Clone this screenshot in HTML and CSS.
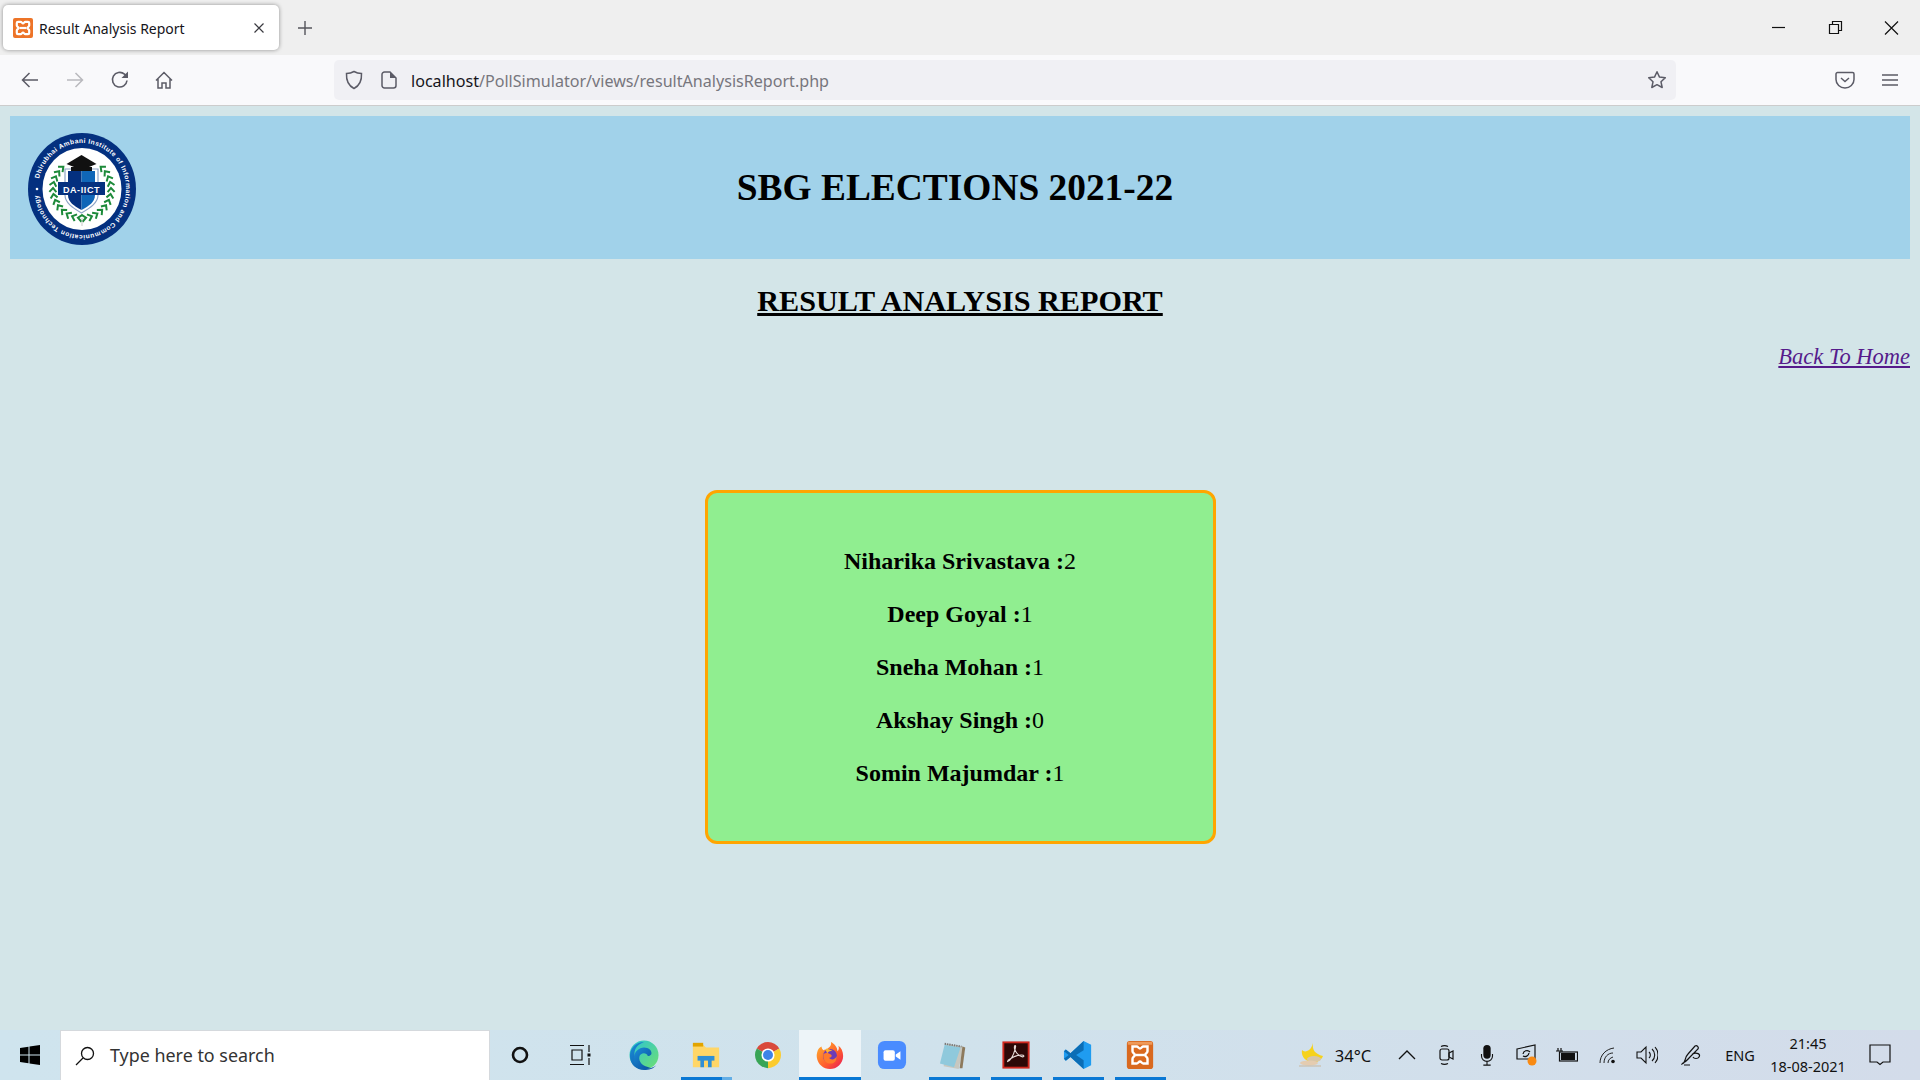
FILE: index.html
```html
<!DOCTYPE html>
<html lang="en">
<head>
<meta charset="utf-8">
<title>Result Analysis Report</title>
<link rel="stylesheet" href="styles.css">
</head>
<body>
<div class="screen">
  <div class="tabstrip">
    <div class="tab">
      <svg class="favicon" viewBox="0 0 20 20"><rect width="20" height="20" rx="2" fill="#ed7428"/><path d="M5 3.800h2.700c1 0 1.400 1.700 2.300 1.700s1.300-1.700 2.300-1.700H15a1.200 1.200 0 0 1 1.200 1.200v2.500c0 1-1.700 1.600-1.700 2.500s1.700 1.500 1.700 2.500V15a1.200 1.200 0 0 1-1.200 1.200h-2.700c-1 0-1.400-1.700-2.300-1.700s-1.300 1.700-2.300 1.700H5A1.200 1.200 0 0 1 3.800 15v-2.500c0-1 1.700-1.600 1.700-2.500S3.800 8.500 3.800 7.500V5A1.200 1.200 0 0 1 5 3.800z" fill="none" stroke="#fff" stroke-width="2.200"/><path d="M6.500 10h7" stroke="#fff" stroke-width="2.200"/></svg>
      <span class="tab-title">Result Analysis Report</span>
      <svg class="tab-close" viewBox="0 0 12 12"><path d="M1.500 1.500l9 9M10.500 1.500l-9 9" stroke="#3a3a40" stroke-width="1.200"/></svg>
    </div>
    <svg class="newtab" viewBox="0 0 16 16"><path d="M8 1v14M1 8h14" stroke="#55555c" stroke-width="1.400"/></svg>
    <div class="winctl">
      <svg class="winbtn" viewBox="0 0 56 20"><path d="M21 9.500h13" stroke="#111" stroke-width="1.200"/></svg>
      <svg class="winbtn" viewBox="0 0 56 20"><path d="M23.500 6.500h9v9h-9zM26.500 6.500v-3h9v9h-3" fill="none" stroke="#111" stroke-width="1.200" transform="translate(-1 0)"/></svg>
      <svg class="winbtn" viewBox="0 0 56 20"><path d="M22 3.500l13 13M35 3.500l-13 13" stroke="#111" stroke-width="1.200"/></svg>
    </div>
  </div>
  <div class="toolbar">
    <svg class="tool" viewBox="0 0 20 20"><path d="M18 10H2.500M9.500 3l-7 7 7 7" fill="none" stroke="#5b5b66" stroke-width="1.500"/></svg>
    <svg class="tool" viewBox="0 0 20 20"><path d="M2 10h15.500M10.500 3l7 7-7 7" fill="none" stroke="#b9b9be" stroke-width="1.500"/></svg>
    <svg class="tool" viewBox="0 0 20 20"><path d="M18 10.500a7.300 7.300 0 1 1-2.500-6.300L18 6.500" fill="none" stroke="#5b5b66" stroke-width="1.600"/><path d="M19 1.500V8h-6.500z" fill="#5b5b66"/></svg>
    <svg class="tool" viewBox="0 0 20 20"><path d="M2 10.500L10 2.500l8 8M4 8.500V18h4v-5h4v5h4V8.500" fill="none" stroke="#5b5b66" stroke-width="1.500"/></svg>
    <div class="urlbar">
      <svg class="url-shield" viewBox="0 0 20 20"><path d="M10 1.500c2.500 1.500 5 2 7.500 2 .4 7-1.700 12-7.500 15C4.200 15.500 2.100 10.500 2.500 3.500c2.500 0 5-.5 7.500-2z" fill="none" stroke="#5b5b66" stroke-width="1.500"/></svg>
      <svg class="url-page" viewBox="0 0 16 18"><path d="M4 1h5l6 6v7.500A2.500 2.500 0 0 1 12.500 17h-9A2.500 2.500 0 0 1 1 14.500v-11A2.500 2.500 0 0 1 3.500 1z" fill="none" stroke="#5b5b66" stroke-width="1.500"/><path d="M9 1v6h6" fill="#5b5b66"/></svg>
      <span class="url-text"><span class="url-host">localhost</span>/PollSimulator/views/resultAnalysisReport.php</span>
      <svg class="url-star" viewBox="0 0 20 20"><path d="M10 1.800l2.500 5.300 5.800.7-4.300 4 1.200 5.700L10 14.700l-5.200 2.800L6 11.800l-4.300-4 5.800-.7z" fill="none" stroke="#5b5b66" stroke-width="1.500" stroke-linejoin="round"/></svg>
    </div>
    <svg class="pocket" viewBox="0 0 20 18"><path d="M2.500 1.500h15A1.500 1.500 0 0 1 19 3v5.500a9 8.500 0 0 1-18 0V3a1.500 1.500 0 0 1 1.500-1.500z" fill="none" stroke="#5b5b66" stroke-width="1.500"/><path d="M6 7l4 3.500L14 7" fill="none" stroke="#5b5b66" stroke-width="1.500"/></svg>
    <svg class="burger" viewBox="0 0 16 14"><path d="M0 2h16M0 7h16M0 12h16" stroke="#5b5b66" stroke-width="1.500"/></svg>
  </div>

  <main class="page">
    <header class="banner">
      <svg class="logo" viewBox="0 0 108 112">
        <defs>
          <path id="ring" d="M11.100 45.700A44 46 0 1 1 96.900 66.300A44 46 0 1 1 11.100 45.700"/>
          <path id="lf" d="M4-3.500L0 0L4 3.500" fill="none" stroke="#1d8a3a" stroke-width="2"/>
          <path id="rf" d="M-4-3.500L0 0L-4 3.500" fill="none" stroke="#1d8a3a" stroke-width="2"/>
        </defs>
        <ellipse cx="54" cy="56" rx="54" ry="56" fill="#04307f"/>
        <ellipse cx="54" cy="56" rx="39.500" ry="41" fill="#fff"/>
        <text class="logo-ring"><textPath href="#ring" textLength="266">Dhirubhai Ambani Institute of Information and Communication Technology</textPath></text>
        <circle cx="9" cy="56" r="1.300" fill="#fff"/>
        <use href="#lf" transform="rotate(8 54 56) translate(54 85)"/>
        <use href="#lf" transform="rotate(20 54 56) translate(54 85)"/>
        <use href="#lf" transform="rotate(32 54 56) translate(54 85)"/>
        <use href="#lf" transform="rotate(44 54 56) translate(54 85)"/>
        <use href="#lf" transform="rotate(56 54 56) translate(54 85)"/>
        <use href="#lf" transform="rotate(68 54 56) translate(54 85)"/>
        <use href="#lf" transform="rotate(80 54 56) translate(54 85)"/>
        <use href="#lf" transform="rotate(92 54 56) translate(54 85)"/>
        <use href="#lf" transform="rotate(104 54 56) translate(54 85)"/>
        <use href="#lf" transform="rotate(116 54 56) translate(54 85)"/>
        <use href="#lf" transform="rotate(128 54 56) translate(54 85)"/>
        <use href="#lf" transform="rotate(140 54 56) translate(54 85)"/>
        <use href="#rf" transform="rotate(-8 54 56) translate(54 85)"/>
        <use href="#rf" transform="rotate(-20 54 56) translate(54 85)"/>
        <use href="#rf" transform="rotate(-32 54 56) translate(54 85)"/>
        <use href="#rf" transform="rotate(-44 54 56) translate(54 85)"/>
        <use href="#rf" transform="rotate(-56 54 56) translate(54 85)"/>
        <use href="#rf" transform="rotate(-68 54 56) translate(54 85)"/>
        <use href="#rf" transform="rotate(-80 54 56) translate(54 85)"/>
        <use href="#rf" transform="rotate(-92 54 56) translate(54 85)"/>
        <use href="#rf" transform="rotate(-104 54 56) translate(54 85)"/>
        <use href="#rf" transform="rotate(-116 54 56) translate(54 85)"/>
        <use href="#rf" transform="rotate(-128 54 56) translate(54 85)"/>
        <use href="#rf" transform="rotate(-140 54 56) translate(54 85)"/>
        <path d="M37 36h33v26c0 8-8 13-16.500 18C45 75 37 70 37 62z" fill="#fff" stroke="#8ea4c6" stroke-width="1.200"/>
        <path d="M40 38h13.500v39C46 73 40 69 40 62z" fill="#04307f"/>
        <path d="M53.500 38H67v24c0 7-6 11-13.500 15z" fill="#0f66b8"/>
        <path d="M53.500 22l15 9-15 6-15-6z" fill="#111"/>
        <path d="M43 34h21v4H43z" fill="#111"/>
        <rect x="30" y="49" width="47" height="13" fill="#04307f"/>
        <text class="logo-name" x="53.500" y="59.500" text-anchor="middle">DA-IICT</text>
        <path d="M54 85v8" stroke="#bbb" stroke-width=".8"/>
      </svg>
      <h1 class="banner-title">SBG ELECTIONS 2021-22</h1>
    </header>
    <h2 class="report-title">RESULT ANALYSIS REPORT</h2>
    <div class="back-row"><a class="back-link" href="#">Back To Home</a></div>
    <section class="result-box">
      <p class="result"><b>Niharika Srivastava :</b>2</p>
      <p class="result"><b>Deep Goyal :</b>1</p>
      <p class="result"><b>Sneha Mohan :</b>1</p>
      <p class="result"><b>Akshay Singh :</b>0</p>
      <p class="result"><b>Somin Majumdar :</b>1</p>
    </section>
  </main>

  <footer class="taskbar">
    <div class="start"><svg class="win" viewBox="0 0 20 20"><path d="M0 3l8.500-1.300V9.500H0zM9.500 1.500L20 0v9.500H9.500zM0 10.500h8.500v7.800L0 17zM9.500 10.500H20V20L9.500 18.500z" fill="#000"/></svg></div>
    <div class="search">
      <svg class="search-ico" viewBox="0 0 20 20"><circle cx="12.500" cy="7.500" r="6" fill="none" stroke="#111" stroke-width="1.300"/><path d="M8 12L1 19" stroke="#111" stroke-width="1.300"/></svg>
      <span class="search-text">Type here to search</span>
    </div>
    <div class="slot"><svg class="i18" viewBox="0 0 18 18"><circle cx="9" cy="9" r="7" fill="none" stroke="#111" stroke-width="2.600"/></svg></div>
    <div class="slot"><svg class="i22 taskview" viewBox="0 0 22 22"><path d="M1 1.500h14M1 20.500h14M3 6h10v10H3zM20 1v7M20 14v7" fill="none" stroke="#111" stroke-width="1.200"/><rect x="18.500" y="9.500" width="3" height="3" fill="#111"/></svg></div>
    <div class="slot"><svg class="app" viewBox="0 0 32 32"><defs><linearGradient id="edge1" x1="0" y1="0" x2="1" y2="1"><stop offset="0" stop-color="#2bc3d6"/><stop offset="1" stop-color="#6fe070"/></linearGradient><linearGradient id="edge2" x1="0" y1="0" x2="1" y2="1"><stop offset="0" stop-color="#1a8ed8"/><stop offset="1" stop-color="#0b4f9e"/></linearGradient></defs><circle cx="16" cy="16" r="15.500" fill="url(#edge1)"/><path d="M1 17C1 8 8 2 16 2 8 5 5 10 6 17c1 8 8 13 16 13 2 0 5-1 7-3-3 4-8 5-13 5C8 32 1 26 1 17z" fill="url(#edge2)"/><path d="M5 21C5 12 11 8 16 8c5 0 8 3 8 6 0 2-2 3-4 3-1-4-8-4-9 1s4 11 12 11c-9 3-18-1-18-8z" fill="url(#edge2)"/></svg></div>
    <div class="slot has-line has-stack"><svg class="app" viewBox="0 0 32 32"><path d="M2 5h11l3 3h14v21H2z" fill="#ffd667"/><path d="M2 3h11v4H2z" fill="#e2a400"/><path d="M10 29V17h12v12h-4v-7h-4v7z" fill="#2f8fd6"/><path d="M7 17h18v5H7z" fill="#2f8fd6"/><path d="M14 22h4v7h-4z" fill="#ffd667"/></svg></div>
    <div class="slot"><svg class="app" viewBox="0 0 32 32"><path d="M16 16L4 9a14 14 0 0 1 24 0z" fill="#d9493b"/><path d="M16 16l12-7a14 14 0 0 1-12 21z" fill="#fbcb2e"/><path d="M16 16v14A14 14 0 0 1 4 9z" fill="#39a556"/><circle cx="16" cy="16" r="7" fill="#fff"/><circle cx="16" cy="16" r="5.300" fill="#3f83e8"/></svg></div>
    <div class="slot has-line active"><svg class="app" viewBox="0 0 32 32"><defs><linearGradient id="fx" x1="0" y1="0" x2="1" y2="1"><stop offset="0" stop-color="#ffb52c"/><stop offset=".6" stop-color="#ff5b2e"/><stop offset="1" stop-color="#e6175c"/></linearGradient></defs><path d="M3 11c-1 3-1.500 5-1 8 1 7 7 12 14 12s14-6 14-14c0-5-2-9-5-11 1 3 0 5-1 6 0-4-3-8-7-10 1 4-2 6-5 8-1 0-2 0-3 1-1-1-2-2-2-4-2 1-3 2-4 4z" fill="url(#fx)"/><circle cx="16" cy="17" r="7.500" fill="#6d3bb8"/><path d="M9 15c3-2 5-1 7 0 3 1 2 4-1 4 2 3 7 2 8-2 1 6-4 9-8 8-4 0-7-5-6-10z" fill="#ff7a2c"/><path d="M12 9c2 1 5 1 7 3-3-1-4 0-6 2-1-2-2-3-1-5z" fill="#ffb52c"/></svg></div>
    <div class="slot"><svg class="app" viewBox="0 0 32 32"><rect width="30" height="30" x="1" y="1" rx="7" fill="#4a8cff"/><rect x="7" y="11" width="12" height="11" rx="2" fill="#fff"/><path d="M20 15.500l5-3.500v9l-5-3.500z" fill="#fff"/></svg></div>
    <div class="slot has-line"><svg class="app" viewBox="0 0 32 32"><path d="M7 4l19 3-5 24-16-3z" fill="#c7c7bf"/><path d="M6 5l17 3-7 21-15-4z" fill="#8fc9dc"/><path d="M25 7l3 1-3 22-3 0z" fill="#8d7a5d"/><path d="M6 4l18 3" stroke="#777" stroke-width="2" stroke-dasharray="1.500 1"/></svg></div>
    <div class="slot has-line"><svg class="app" viewBox="0 0 32 32"><rect x="2.500" y="2.500" width="27" height="27" fill="#2d0807" stroke="#d0281f" stroke-width="2"/><path d="M7 23c3-1 6-6 8-13 .5-3 1-4 0-4s-1 3 0 5c2 4 4 6 8 7 2 0 2-2-1-2-4 0-9 2-12 4-2 1-3 2-3 3z" fill="none" stroke="#e8dcd9" stroke-width="1.200"/></svg></div>
    <div class="slot has-line"><svg class="app" viewBox="0 0 32 32"><path d="M22 1l8 4v22l-8 4-14-13-5 4-2-2v-8l2-2 5 4z" fill="#1f9cf0"/><path d="M22 1v10l-8 5 8 5.500V31L8 18l-5 4-2-2 5-4-5-4 2-2 5 4z" fill="#0b6db5"/></svg></div>
    <div class="slot has-line"><svg class="app" viewBox="0 0 32 32"><rect x="2" y="1" width="28" height="30" rx="3" fill="#d9691f"/><rect x="3" y="2" width="26" height="3" fill="#ee9a5a"/><path d="M8 7h4.500c1.500 0 2 2 3.500 2s2-2 3.500-2H24v5c0 2-2.500 2.500-2.500 4s2.500 2 2.500 4v5h-4.500c-1.500 0-2-2-3.500-2s-2 2-3.500 2H8v-5c0-2 2.500-2.500 2.500-4S8 14 8 12z" fill="none" stroke="#fff" stroke-width="2.600"/><path d="M11 16h10" stroke="#fff" stroke-width="2.600"/></svg></div>
    <div class="tray">
      <div class="tray-weather"><svg class="weather" viewBox="0 0 28 26"><path d="M16 1c-1 7 2 11 10 13-2 5-8 8-13 6-6-2-9-7-8-12 1 1 3 2 5 1 3-1 5-4 6-8z" fill="#f6d21c"/><ellipse cx="17" cy="17" rx="7" ry="3" fill="#d7c6a8"/><ellipse cx="12" cy="21" rx="9" ry="2.500" fill="#e4ccb0"/><path d="M2 24h22" stroke="#c9b79d" stroke-width="1"/></svg></div>
      <div class="tray-temp">34°C</div>
      <div class="tslot"><svg class="i18" viewBox="0 0 18 18"><path d="M1 13l8-8 8 8" fill="none" stroke="#111" stroke-width="1.300"/></svg></div>
      <div class="tslot"><svg class="i22" viewBox="0 0 16 22"><rect x="1" y="5" width="9" height="11" rx="2" fill="none" stroke="#111" stroke-width="1.200"/><path d="M10 9l4-2v8l-4-2z" fill="none" stroke="#111" stroke-width="1.200"/><path d="M2 2.500c2-1 5-1 7 0M2 19.500c2 1 5 1 7 0" fill="none" stroke="#111" stroke-width="1.200"/></svg></div>
      <div class="tslot"><svg class="i22" viewBox="0 0 16 24"><rect x="4" y="1" width="8" height="15" rx="4" fill="#111"/><path d="M2 11v2a6 6 0 0 0 12 0v-2M8 19v4M4 23h8" fill="none" stroke="#111" stroke-width="1.200"/></svg></div>
      <div class="tslot"><svg class="i22" viewBox="0 0 22 22"><path d="M1 5L19 1v14H1z" fill="none" stroke="#111" stroke-width="1.200"/><path d="M7 10a4 4 0 0 1 7-2M13 9a4 4 0 0 1-6 3" fill="none" stroke="#111" stroke-width="1.200"/><circle cx="16" cy="17" r="4.500" fill="#f98a12"/></svg></div>
      <div class="tslot"><svg class="i22" viewBox="0 0 22 14"><rect x="3.500" y="4" width="18" height="9" fill="none" stroke="#111" stroke-width="1.200"/><rect x="5" y="5" width="14" height="7" fill="#111"/><path d="M0 3h7M2 0v3M5 0v3" stroke="#111" stroke-width="1.200"/></svg></div>
      <div class="tslot"><svg class="i18" viewBox="0 0 18 18"><path d="M2 17C2 9 8 3 16 2M6 17c0-6 4-10 9-10M10 17c0-3 2-5 5-6" fill="none" stroke="#222" stroke-width="1"/><circle cx="15" cy="15.500" r="1.800" fill="#111"/></svg></div>
      <div class="tslot"><svg class="i22" viewBox="0 0 22 20"><path d="M1 7h4l5-5v16l-5-5H1z" fill="none" stroke="#111" stroke-width="1.100"/><path d="M13 7a4 4 0 0 1 0 6M16 4a8 8 0 0 1 0 12M19 2a12 12 0 0 1 0 16" fill="none" stroke="#111" stroke-width="1.100"/></svg></div>
      <div class="tslot wide"><svg class="i22" viewBox="0 0 22 22"><path d="M1 20c4-1 2-6 6-10l7-8c2-1 4 1 3 3l-8 8c-3 3-4 5-7 6zM11 10c5-2 9 0 7 3-1 2-5 2-6 0M3 21h6" fill="none" stroke="#111" stroke-width="1.200"/></svg></div>
      <div class="tray-lang">ENG</div>
      <div class="clock"><span>21:45</span><span>18-08-2021</span></div>
      <div class="notif"><svg class="i22" viewBox="0 0 22 22"><path d="M1 1h20v17h-7l-3 2.500L8 18H1z" fill="none" stroke="#111" stroke-width="1.200"/></svg></div>
    </div>
  </footer>
</div>
</body>
</html>
```

FILE: styles.css
```css
* { box-sizing: border-box; }
html, body { margin: 0; padding: 0; }
body { font-family: "Liberation Serif", serif; background: #d3e5e8; }
svg { display: block; flex: none; }

.screen { width: 1920px; height: 1080px; display: flex; flex-direction: column; overflow: hidden; }

/* Browser chrome */
.tabstrip { height: 55px; background: #efefef; display: flex; align-items: center; padding-left: 3px; flex: none; }
.tab { width: 276px; height: 45px; background: #fff; border-radius: 5px; box-shadow: 0 0 4px rgba(0,0,0,.4); display: flex; align-items: center; padding: 0 14px 0 10px; }
.favicon { width: 20px; height: 20px; margin-top: 1px; }
.tab-title { font: 14px "Noto Sans", sans-serif; color: #15141a; margin: 1px 0 0 6px; flex: 1; white-space: nowrap; }
.tab-close { width: 12px; height: 12px; }
.newtab { width: 16px; height: 16px; margin-left: 18px; }
.winctl { margin-left: auto; display: flex; padding-right: 1px; }
.winbtn { width: 56px; height: 20px; }

.toolbar { height: 51px; background: #f9f9fb; border-bottom: 1px solid #ccc; display: flex; align-items: center; padding-left: 20px; flex: none; }
.tool { width: 20px; height: 20px; margin-right: 24.500px; }
.urlbar { width: 1342px; height: 40px; margin-left: 136px; background: #f0f0f4; border-radius: 5px; display: flex; align-items: center; padding: 0 9px 0 10px; }
.url-shield { width: 20px; height: 20px; }
.url-page { width: 16px; height: 18px; margin-left: 17px; }
.url-text { font: 16.100px "Noto Sans", sans-serif; color: #77767d; margin: 2px 0 0 14px; flex: 1; white-space: nowrap; }
.url-host { color: #15141a; }
.url-star { width: 20px; height: 20px; }
.pocket { width: 20px; height: 18px; margin-left: 159px; }
.burger { width: 16px; height: 14px; margin-left: 27px; }

/* Page */
.page { flex: 1; padding: 10px 10px 0; background: #d3e5e8; min-height: 0; }
.banner { height: 143px; background: #a1d2ea; display: grid; grid-template-columns: 126px 1fr 136px; align-items: center; }
.logo { width: 108px; height: 112px; margin: 2px 0 0 18px; grid-column: 1; }
.logo-ring { font: 700 6.600px "Liberation Sans", sans-serif; fill: #fff; }
.logo-name { font: 700 9px "Liberation Sans", sans-serif; fill: #fff; letter-spacing: .6px; }
.banner-title { grid-column: 2; margin: 0 0 1px; font-size: 37.400px; font-weight: 700; text-align: center; color: #000; }
.report-title { margin: 24px 0 0; font-size: 30.200px; line-height: 37px; font-weight: 700; text-align: center; text-decoration: underline; color: #000; }
.back-row { margin-top: 23px; text-align: right; font-size: 22.500px; line-height: 27px; }
.back-link { color: #551a8b; font-style: italic; }
.result-box { width: 511px; height: 354px; margin: 120px auto 0; padding: 41.500px 0; background: #90ee90; border: 3px solid #ffa500; border-radius: 12px; }
.result { margin: 0; font-size: 24px; line-height: 53px; text-align: center; color: #000; }

/* Taskbar */
.taskbar { height: 50px; flex: none; display: flex; background: linear-gradient(90deg, #cfe4ee 0%, #d0e2ec 50%, #d3dcea 100%); font-family: "Noto Sans", sans-serif; color: #111; }
.start { width: 60px; display: flex; align-items: center; justify-content: center; }
.win { width: 20px; height: 20px; }
.search { width: 430px; margin-right: -1px; background: #fff; border: 1px solid #d5d9dd; border-width: 1px 1px 0 1px; display: flex; align-items: center; padding-left: 14px; }
.search-ico { width: 20px; height: 20px; }
.search-text { font-size: 17.900px; color: #333; margin: -2px 0 0 15px; }
.slot { width: 62px; position: relative; display: flex; align-items: center; justify-content: center; }
.slot.active { background: #edf4f8; }
.taskview { margin-right: 5px; }
.has-line::after { content: ""; position: absolute; left: 6px; right: 5px; bottom: 0; height: 3px; background: #0a78d4; }
.active.has-line::after { left: 0; right: 0; }
.has-stack::before { content: ""; position: absolute; left: 47px; width: 10px; bottom: 0; height: 3px; background: #63aee6; z-index: 1; }
.has-stack::after { right: 15px; }
.app { width: 30px; height: 30px; }
.i18 { width: 18px; height: 18px; }
.i22 { width: 22px; height: 22px; }

.tray { margin-left: auto; display: flex; padding-right: 13px; align-items: stretch; }
.tray-weather { width: 42px; display: flex; align-items: center; justify-content: center; }
.weather { width: 28px; height: 26px; }
.tray-temp { width: 55px; display: flex; align-items: center; justify-content: center; font-size: 16.600px; padding-right: 13px; }
.tslot { width: 40px; display: flex; align-items: center; justify-content: center; }
.tslot.wide { width: 50px; }
.tray-lang { width: 46px; display: flex; align-items: center; justify-content: center; font-size: 14.500px; }
.clock { width: 88px; margin-left: 1px; display: flex; flex-direction: column; align-items: center; justify-content: center; font-size: 14.500px; line-height: 23px; }
.notif { width: 55px; display: flex; align-items: center; justify-content: center; }
```
